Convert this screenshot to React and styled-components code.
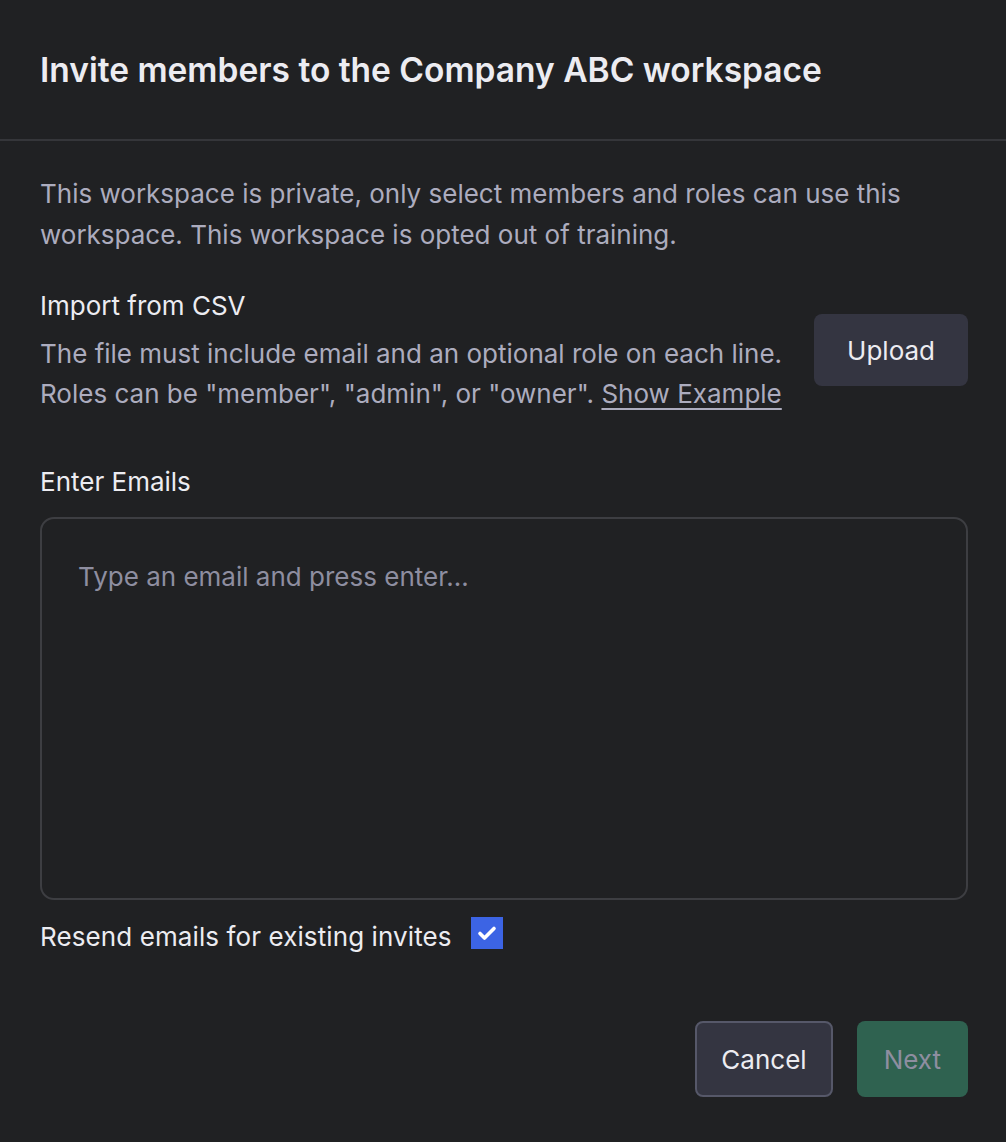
import React, { useState } from 'react';
import styled, { createGlobalStyle } from 'styled-components';

const GlobalStyle = createGlobalStyle`
  html, body {
    margin: 0;
    padding: 0;
    background: #202123;
  }
  body {
    font-family: Inter, "Noto Sans", "Liberation Sans", sans-serif;
    -webkit-font-smoothing: antialiased;
  }
`;

const Modal = styled.div`
  width: 1006px;
  min-height: 1142px;
  background: #202123;
  color: #ececf1;
  box-sizing: border-box;
`;

const Header = styled.header`
  height: 141px;
  padding: 0 40px;
  display: flex;
  align-items: center;
  border-bottom: 2px solid #35363a;
  box-sizing: border-box;
`;

const Title = styled.h1`
  margin: 0;
  font-size: 33.5px;
  font-weight: 600;
  letter-spacing: 0;
  color: #ececf1;
`;

const Body = styled.div`
  padding: 32px 38px 0 40px;
  display: flex;
  flex-direction: column;
`;

const Muted = styled.p`
  margin: 0;
  font-size: 26px;
  line-height: ${p => p.$lh || 41}px;
  color: #acacbe;
`;

const CsvRow = styled.div`
  margin-top: 31px;
  display: flex;
  align-items: center;
  justify-content: space-between;
  gap: 24px;
`;

const CsvText = styled.div`
  display: flex;
  flex-direction: column;
  gap: 8px;
`;

const Label = styled.div`
  font-size: 26px;
  line-height: 40px;
  color: #ececf1;
`;

const Link = styled.a`
  color: #acacbe;
  text-decoration: underline;
  text-underline-offset: 5px;
  text-decoration-thickness: 2px;
  cursor: pointer;
`;

const Button = styled.button`
  font-family: inherit;
  font-size: 26px;
  height: ${p => p.$h || 72}px;
  padding: 0 ${p => p.$px || 32}px;
  border-radius: 8px;
  border: 2px solid ${p => p.$border || 'transparent'};
  background: ${p => p.$bg || '#343541'};
  color: ${p => p.$color || '#ececf1'};
  cursor: pointer;
`;

const EmailSection = styled.div`
  margin-top: 48px;
  display: flex;
  flex-direction: column;
  gap: 15px;
`;

const EmailBox = styled.textarea`
  width: 928px;
  height: 383px;
  box-sizing: border-box;
  border: 2px solid #3d3e42;
  border-radius: 14px;
  background: transparent;
  padding: 42px 36px;
  resize: none;
  outline: none;
  font-family: inherit;
  font-size: 26px;
  color: #ececf1;
  &::placeholder {
    color: #8e8ea0;
  }
`;

const CheckRow = styled.label`
  margin-top: 17px;
  display: flex;
  align-items: center;
  gap: 19px;
  font-size: 26px;
  line-height: 40px;
  letter-spacing: 0.1px;
  color: #ececf1;
`;

const Check = styled.span`
  width: 32px;
  height: 32px;
  background: ${p => (p.$on ? '#3c64e4' : 'transparent')};
  border: ${p => (p.$on ? 'none' : '2px solid #565869')};
  display: inline-flex;
  align-items: center;
  justify-content: center;
  margin-top: -8px;
`;

const Footer = styled.div`
  margin-top: 64px;
  display: flex;
  justify-content: flex-end;
  gap: 24px;
`;

export default function App() {
  const [resend, setResend] = useState(true);

  return (
    <Modal>
      <GlobalStyle />
      <Header>
        <Title>Invite members to the Company ABC workspace</Title>
      </Header>
      <Body>
        <Muted>
          This workspace is private, only select members and roles can use this workspace. This
          workspace is opted out of training.
        </Muted>

        <CsvRow>
          <CsvText>
            <Label>Import from CSV</Label>
            <Muted $lh={40}>
              The file must include email and an optional role on each line.
              <br />
              Roles can be "member", "admin", or "owner". <Link>Show Example</Link>
            </Muted>
          </CsvText>
          <Button $px={31}>Upload</Button>
        </CsvRow>

        <EmailSection>
          <Label>Enter Emails</Label>
          <EmailBox placeholder="Type an email and press enter..." />
        </EmailSection>

        <CheckRow onClick={() => setResend(!resend)}>
          Resend emails for existing invites
          <Check $on={resend}>
            {resend && (
              <svg width="24" height="24" viewBox="0 0 24 24">
                <path
                  d="M5 12.5l4.5 4.5L19 7.5"
                  fill="none"
                  stroke="#fff"
                  strokeWidth="3.6"
                  strokeLinecap="round"
                  strokeLinejoin="round"
                />
              </svg>
            )}
          </Check>
        </CheckRow>

        <Footer>
          <Button $h={76} $px={24} $border="#565869">Cancel</Button>
          <Button $h={76} $px={25} $bg="#2f6250" $color="#8e8ea0">Next</Button>
        </Footer>
      </Body>
    </Modal>
  );
}
